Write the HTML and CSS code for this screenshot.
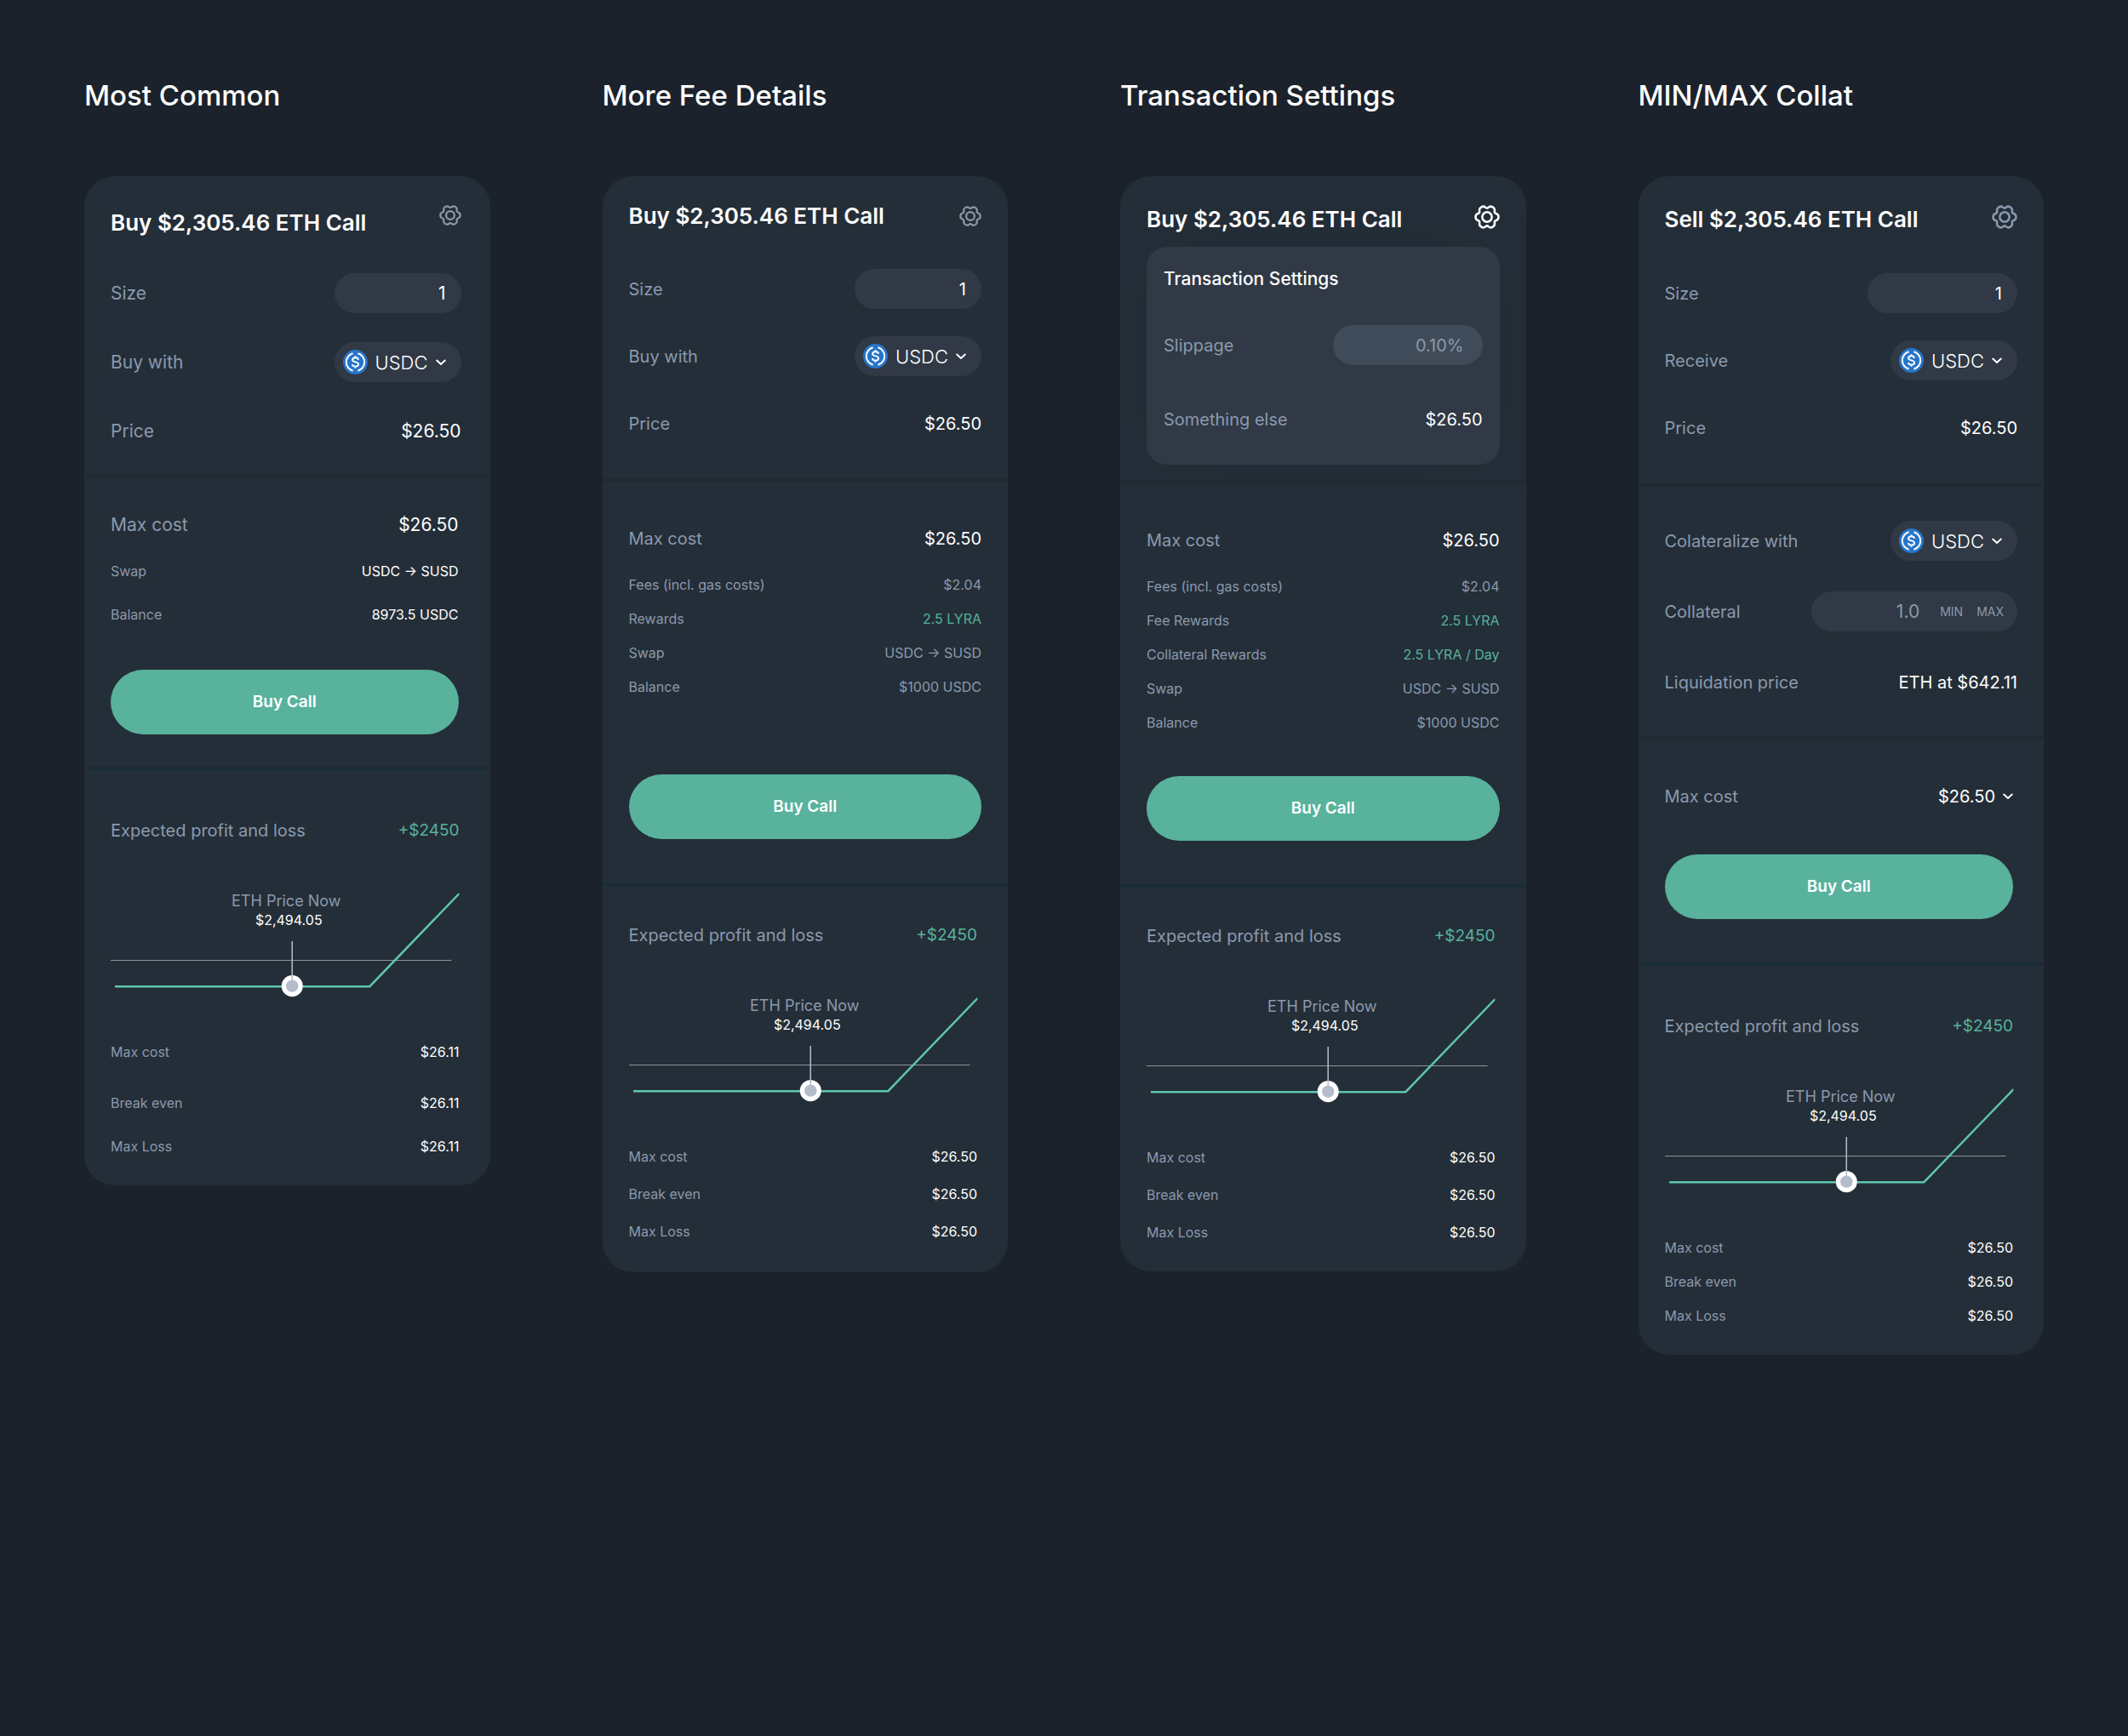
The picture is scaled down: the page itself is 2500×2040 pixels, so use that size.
FILE: index.html
```html
<!DOCTYPE html>
<html lang="en">
<head>
    <meta charset="utf-8">
    <title>Trade Form</title>
    <link rel="stylesheet" href="styles.css">
</head>
<body>
    <!-- shared icons -->
    <svg class="sprite" aria-hidden="true">
        <symbol id="gear" viewBox="-13 -13 26 26">
            <path d="M11.7 0C11.7 4.2 8.7 2.9 7.8 4.5C6.9 6.1 9.5 8 5.8 10.1C2.2 12.2 1.8 9 0 9C-1.8 9-2.2 12.2-5.8 10.1C-9.5 8-6.9 6.1-7.8 4.5C-8.7 2.9-11.7 4.2-11.7 0C-11.7-4.2-8.7-2.9-7.8-4.5C-6.9-6.1-9.5-8-5.8-10.1C-2.2-12.2-1.8-9 0-9C1.8-9 2.2-12.2 5.8-10.1C9.5-8 6.9-6.1 7.8-4.5C8.7-2.9 11.7-4.2 11.7 0Z"/>
            <circle r="4.9"/>
        </symbol>
        <symbol id="usdc" viewBox="0 0 29 29">
            <circle cx="14.5" cy="14.5" r="14.5" fill="#2775ca"/>
            <path d="M11.6 4.2a10.7 10.7 0 0 0 0 20.6M17.4 4.2a10.7 10.7 0 0 1 0 20.6" fill="none" stroke="#fff" stroke-width="2"/>
            <path d="M18 11.8C17.8 10.2 16.4 9.3 14.5 9.3C12.5 9.3 11.1 10.3 11.1 11.9C11.1 15.4 18.1 13.4 18.1 17.1C18.1 18.8 16.6 19.7 14.5 19.7C12.4 19.7 11 18.7 10.9 17M14.5 7.2V9.3M14.5 19.7V21.8" fill="none" stroke="#fff" stroke-width="1.9"/>
        </symbol>
        <symbol id="chevron" viewBox="0 0 12 8">
            <path d="M1.2 1.6L6 5.9L10.8 1.6" fill="none" stroke="#fff" stroke-width="2" stroke-linecap="round" stroke-linejoin="round"/>
        </symbol>
        <symbol id="payoff" viewBox="0 0 409 130">
            <path d="M0 84.5H400" stroke="#8e969e"/>
            <path d="M5 115H304L409 6" fill="none" stroke="#5ec6ab" stroke-width="2.5"/>
            <circle cx="213" cy="114.5" r="12.5" fill="#fff"/>
            <path d="M213 62V112" stroke="#b5bdcc" stroke-width="1.5"/>
            <circle cx="213" cy="114.5" r="7.2" fill="#b5bdcc"/>
        </symbol>
    </svg>

    <main class="board">
        <section class="variant variant-common">
            <h1>Most Common</h1>
            <form class="card">
                <div class="section order">
                    <header class="card-header">
                        <h2>Buy $2,305.46 ETH Call</h2>
                        <button type="button" class="settings" aria-label="Settings"><svg><use href="#gear"/></svg></button>
                    </header>
                    <div class="fields">
                        <div class="field">
                            <label for="size-1">Size</label>
                            <input id="size-1" class="pill" type="text" value="1">
                        </div>
                        <div class="field">
                            <label for="token-1">Buy with</label>
                            <div class="pill token">
                                <svg class="coin"><use href="#usdc"/></svg>
                                <select id="token-1"><option>USDC</option></select>
                                <svg class="chevron"><use href="#chevron"/></svg>
                            </div>
                        </div>
                        <div class="field"><span class="label">Price</span><span>$26.50</span></div>
                    </div>
                </div>
                <div class="section cost">
                    <div class="total"><span class="label">Max cost</span><span>$26.50</span></div>
                    <dl class="details bright">
                        <div><dt>Swap</dt><dd>USDC → SUSD</dd></div>
                        <div><dt>Balance</dt><dd>8973.5 USDC</dd></div>
                    </dl>
                    <button type="submit" class="submit">Buy Call</button>
                </div>
                <div class="section profit">
                    <div class="profit-header"><span class="label">Expected profit and loss</span><span class="green">+$2450</span></div>
                    <svg class="chart" viewBox="0 0 409 130">
                        <use href="#payoff"/>
                        <text class="chart-label" x="206" y="21">ETH Price Now</text>
                        <text class="chart-price" x="209" y="43">$2,494.05</text>
                    </svg>
                    <dl class="details bright">
                        <div><dt>Max cost</dt><dd>$26.11</dd></div>
                        <div><dt>Break even</dt><dd>$26.11</dd></div>
                        <div><dt>Max Loss</dt><dd>$26.11</dd></div>
                    </dl>
                </div>
            </form>
        </section>

        <section class="variant variant-fees">
            <h1>More Fee Details</h1>
            <form class="card">
                <div class="section order">
                    <header class="card-header">
                        <h2>Buy $2,305.46 ETH Call</h2>
                        <button type="button" class="settings" aria-label="Settings"><svg><use href="#gear"/></svg></button>
                    </header>
                    <div class="fields">
                        <div class="field">
                            <label for="size-2">Size</label>
                            <input id="size-2" class="pill" type="text" value="1">
                        </div>
                        <div class="field">
                            <label for="token-2">Buy with</label>
                            <div class="pill token">
                                <svg class="coin"><use href="#usdc"/></svg>
                                <select id="token-2"><option>USDC</option></select>
                                <svg class="chevron"><use href="#chevron"/></svg>
                            </div>
                        </div>
                        <div class="field"><span class="label">Price</span><span>$26.50</span></div>
                    </div>
                </div>
                <div class="section cost">
                    <div class="total"><span class="label">Max cost</span><span>$26.50</span></div>
                    <dl class="details">
                        <div><dt>Fees (incl. gas costs)</dt><dd>$2.04</dd></div>
                        <div><dt>Rewards</dt><dd class="green">2.5 LYRA</dd></div>
                        <div><dt>Swap</dt><dd>USDC → SUSD</dd></div>
                        <div><dt>Balance</dt><dd>$1000 USDC</dd></div>
                    </dl>
                    <button type="submit" class="submit">Buy Call</button>
                </div>
                <div class="section profit">
                    <div class="profit-header"><span class="label">Expected profit and loss</span><span class="green">+$2450</span></div>
                    <svg class="chart" viewBox="0 0 409 130">
                        <use href="#payoff"/>
                        <text class="chart-label" x="206" y="21">ETH Price Now</text>
                        <text class="chart-price" x="209" y="43">$2,494.05</text>
                    </svg>
                    <dl class="details bright">
                        <div><dt>Max cost</dt><dd>$26.50</dd></div>
                        <div><dt>Break even</dt><dd>$26.50</dd></div>
                        <div><dt>Max Loss</dt><dd>$26.50</dd></div>
                    </dl>
                </div>
            </form>
        </section>

        <section class="variant variant-settings">
            <h1>Transaction Settings</h1>
            <form class="card">
                <div class="section order">
                    <header class="card-header">
                        <h2>Buy $2,305.46 ETH Call</h2>
                        <button type="button" class="settings large active" aria-label="Settings"><svg><use href="#gear"/></svg></button>
                    </header>
                    <div class="panel">
                        <h3>Transaction Settings</h3>
                        <div class="fields">
                            <div class="field">
                                <label for="slippage">Slippage</label>
                                <input id="slippage" class="pill wide" type="text" placeholder="0.10%">
                            </div>
                            <div class="field"><span class="label">Something else</span><span>$26.50</span></div>
                        </div>
                    </div>
                </div>
                <div class="section cost">
                    <div class="total"><span class="label">Max cost</span><span>$26.50</span></div>
                    <dl class="details">
                        <div><dt>Fees (incl. gas costs)</dt><dd>$2.04</dd></div>
                        <div><dt>Fee Rewards</dt><dd class="green">2.5 LYRA</dd></div>
                        <div><dt>Collateral Rewards</dt><dd class="green">2.5 LYRA / Day</dd></div>
                        <div><dt>Swap</dt><dd>USDC → SUSD</dd></div>
                        <div><dt>Balance</dt><dd>$1000 USDC</dd></div>
                    </dl>
                    <button type="submit" class="submit">Buy Call</button>
                </div>
                <div class="section profit">
                    <div class="profit-header"><span class="label">Expected profit and loss</span><span class="green">+$2450</span></div>
                    <svg class="chart" viewBox="0 0 409 130">
                        <use href="#payoff"/>
                        <text class="chart-label" x="206" y="21">ETH Price Now</text>
                        <text class="chart-price" x="209" y="43">$2,494.05</text>
                    </svg>
                    <dl class="details bright">
                        <div><dt>Max cost</dt><dd>$26.50</dd></div>
                        <div><dt>Break even</dt><dd>$26.50</dd></div>
                        <div><dt>Max Loss</dt><dd>$26.50</dd></div>
                    </dl>
                </div>
            </form>
        </section>

        <section class="variant variant-collateral">
            <h1>MIN/MAX Collat</h1>
            <form class="card">
                <div class="section order">
                    <header class="card-header">
                        <h2>Sell $2,305.46 ETH Call</h2>
                        <button type="button" class="settings large" aria-label="Settings"><svg><use href="#gear"/></svg></button>
                    </header>
                    <div class="fields">
                        <div class="field">
                            <label for="size-4">Size</label>
                            <input id="size-4" class="pill wide" type="text" value="1">
                        </div>
                        <div class="field">
                            <label for="token-4">Receive</label>
                            <div class="pill token">
                                <svg class="coin"><use href="#usdc"/></svg>
                                <select id="token-4"><option>USDC</option></select>
                                <svg class="chevron"><use href="#chevron"/></svg>
                            </div>
                        </div>
                        <div class="field"><span class="label">Price</span><span>$26.50</span></div>
                    </div>
                </div>
                <div class="section collateral">
                    <div class="fields">
                        <div class="field">
                            <label for="collateral-token">Colateralize with</label>
                            <div class="pill token">
                                <svg class="coin"><use href="#usdc"/></svg>
                                <select id="collateral-token"><option>USDC</option></select>
                                <svg class="chevron"><use href="#chevron"/></svg>
                            </div>
                        </div>
                        <div class="field">
                            <label for="collateral-amount">Collateral</label>
                            <div class="pill amount">
                                <input id="collateral-amount" type="text" placeholder="1.0">
                                <button type="button">MIN</button>
                                <button type="button">MAX</button>
                            </div>
                        </div>
                        <div class="field"><span class="label">Liquidation price</span><span>ETH at $642.11</span></div>
                    </div>
                </div>
                <div class="section cost">
                    <div class="total">
                        <span class="label">Max cost</span>
                        <button type="button" class="expand">$26.50 <svg class="chevron"><use href="#chevron"/></svg></button>
                    </div>
                    <button type="submit" class="submit">Buy Call</button>
                </div>
                <div class="section profit">
                    <div class="profit-header"><span class="label">Expected profit and loss</span><span class="green">+$2450</span></div>
                    <svg class="chart" viewBox="0 0 409 130">
                        <use href="#payoff"/>
                        <text class="chart-label" x="206" y="21">ETH Price Now</text>
                        <text class="chart-price" x="209" y="43">$2,494.05</text>
                    </svg>
                    <dl class="details bright">
                        <div><dt>Max cost</dt><dd>$26.50</dd></div>
                        <div><dt>Break even</dt><dd>$26.50</dd></div>
                        <div><dt>Max Loss</dt><dd>$26.50</dd></div>
                    </dl>
                </div>
            </form>
        </section>
    </main>
</body>
</html>
```
FILE: styles.css
```css
:root {
    --background: #1b222b;
    --card: #242e38;
    --pill: #303945;
    --pill-light: #404b59;
    --label: #8b99ad;
    --green: #58b29c;
    --divider: #202a33;
    --divider-strong: #1a2c36;
}

* {
    box-sizing: border-box;
    margin: 0;
    padding: 0;
}

body {
    font-family: Inter, "Liberation Sans", sans-serif;
    font-size: 20px;
    line-height: 32px;
    background: var(--background);
    color: #ffffff;
    min-height: 100vh;
}

button,
input,
select {
    font: inherit;
    color: inherit;
    background: none;
    border: none;
    outline: none;
}

button {
    cursor: pointer;
}

.sprite {
    display: none;
}

.board {
    display: grid;
    grid-template-columns: repeat(4, 1fr);
    align-items: start;
    gap: 132px;
    padding: 92px 99px;
}

h1 {
    font-size: 33px;
    font-weight: 500;
    line-height: 40px;
    margin-bottom: 75px;
}

.card {
    background: var(--card);
    border-radius: 36px;
}

.section {
    padding: 33px 31px;
}

.section + .section {
    border-top: 4px solid var(--divider);
}

.section + .profit {
    border-top-color: var(--divider-strong);
}

/* Header */
.card-header {
    display: flex;
    justify-content: space-between;
    align-items: flex-start;
}

h2 {
    font-size: 26px;
    font-weight: 600;
    line-height: 36px;
}

.settings {
    width: 26px;
    height: 26px;
    line-height: 0;
    color: var(--label);
}

.settings svg {
    width: 100%;
    height: 100%;
    fill: none;
    stroke: currentColor;
    stroke-width: 2.2px;
}

.settings.large {
    width: 30px;
    height: 30px;
}

.settings.active {
    color: #ffffff;
}

/* Form rows */
.fields {
    display: flex;
    flex-direction: column;
    gap: 32px;
    margin-top: 44px;
}

.field,
.total,
.profit-header,
.details div {
    display: flex;
    justify-content: space-between;
    align-items: center;
}

.field {
    height: 47px;
}

label,
.label,
dt {
    color: var(--label);
}

.green {
    color: var(--green);
}

.pill {
    width: 149px;
    height: 47px;
    border-radius: 24px;
    background: var(--pill);
}

.pill.wide {
    width: 176px;
}

input.pill {
    padding: 0 18px;
    text-align: right;
}

.token {
    display: flex;
    align-items: center;
    gap: 9px;
    padding: 0 18px 0 10px;
}

.coin {
    width: 29px;
    height: 29px;
}

.token select {
    flex: 1;
    min-width: 0;
    appearance: none;
    font-size: 22px;
    font-weight: 300;
}

.chevron {
    width: 12px;
    height: 8px;
}

.amount {
    display: flex;
    align-items: center;
    gap: 16px;
    width: 242px;
    padding: 0 16px;
}

.amount input {
    flex: 1;
    min-width: 0;
    margin-right: 8px;
    text-align: right;
    font-size: 21px;
}

.amount button {
    font-size: 14px;
    color: var(--label);
}

::placeholder {
    color: var(--label);
}

/* Small print */
.details {
    display: grid;
    gap: 16px;
    font-size: 16px;
    line-height: 24px;
}

.cost .details {
    margin-top: 26px;
}

.details dd {
    color: var(--label);
}

.details.bright dd {
    color: #ffffff;
}

.details dd.green {
    color: var(--green);
}

.expand {
    display: flex;
    align-items: center;
    gap: 9px;
}

.submit {
    display: block;
    width: 100%;
    height: 76px;
    border-radius: 38px;
    background: var(--green);
    font-size: 19px;
    font-weight: 600;
}

/* Profit and loss */
.profit {
    padding: 55px 36px 34px 31px;
}

.profit-header .green {
    font-size: 19px;
}

.chart {
    display: block;
    width: 100%;
    height: auto;
    margin: 52px 0 50px;
    overflow: visible;
}

.chart-label,
.chart-price {
    text-anchor: middle;
    font-size: 18px;
    fill: var(--label);
}

.chart-price {
    font-size: 16px;
    fill: #ffffff;
}

/* Most Common */
.variant-common .order {
    padding: 33px 34px 28px 31px;
}

.variant-common .card-header {
    height: 40px;
}

.variant-common h2 {
    align-self: flex-end;
}

.variant-common .fields {
    gap: 34px;
    margin-top: 41px;
}

.variant-common .field,
.variant-common .total,
.variant-common input {
    font-size: 21px;
}

.variant-common .cost {
    padding: 39px 37px 38px 31px;
}

.variant-common .details {
    gap: 27px;
}

.variant-common .submit {
    margin-top: 53px;
}

.variant-common .profit .details div:first-child {
    padding-bottom: 9px;
}

/* More Fee Details */
.variant-fees .order {
    padding: 29px 31px 41px;
}

.variant-fees .card-header {
    align-items: center;
}

.variant-fees .cost {
    padding: 51px 31px 52px;
}

.variant-fees .submit {
    margin-top: 91px;
}

.variant-fees .profit,
.variant-settings .profit {
    padding-top: 41px;
}

.variant-fees .profit {
    padding-bottom: 36px;
}

.variant-fees .profit .details,
.variant-settings .profit .details {
    gap: 20px;
}

/* Transaction Settings */
.variant-settings .order {
    padding-bottom: 19px;
}

.panel {
    margin-top: 14px;
    padding: 22px 20px 30px;
    border-radius: 24px;
    background: var(--pill);
    box-shadow: 0 0 100px rgba(0, 0, 0, 0.06);
}

.panel h3 {
    font-size: 21px;
    font-weight: 500;
}

.panel .fields {
    gap: 40px;
    margin-top: 38px;
}

.panel .pill {
    background: var(--pill-light);
    padding: 0 22px;
}

.variant-settings .cost {
    padding: 50px 31px 51px;
}

.variant-settings .submit {
    margin-top: 51px;
}

/* MIN/MAX Collat */
.variant-collateral .order {
    padding-bottom: 42px;
}

.variant-collateral .order .fields {
    margin-top: 45px;
}

.collateral {
    padding: 40px 31px;
}

.collateral .fields {
    gap: 36px;
    margin-top: 0;
}

.variant-collateral .cost {
    padding: 51px 36px 51px 31px;
}

.variant-collateral .submit {
    margin-top: 52px;
}
```
